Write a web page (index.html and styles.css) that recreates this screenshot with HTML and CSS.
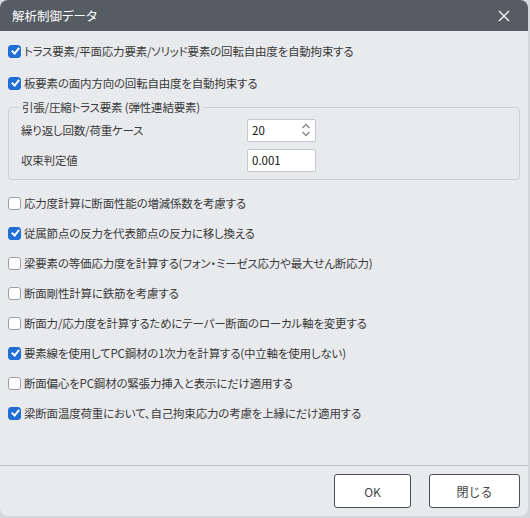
FILE: index.html
```html
<!DOCTYPE html>
<html lang="ja">
<head>
<meta charset="utf-8">
<link rel="stylesheet" href="styles.css">
</head>
<body>
<div class="window">
  <div class="titlebar">
    <span class="title">解析制御データ</span>
    <svg class="close" width="12" height="12" viewBox="0 0 12 12"><path d="M1 1L11 11M11 1L1 11" stroke="#fff" stroke-width="1.3" fill="none"/></svg>
  </div>
  <div class="content">
    <label class="row"><span class="cb on"></span>トラス要素/平面応力要素/ソリッド要素の回転自由度を自動拘束する</label>
    <label class="row"><span class="cb on"></span>板要素の面内方向の回転自由度を自動拘束する</label>
    <fieldset class="group">
      <legend>引張/圧縮トラス要素 (弾性連結要素)</legend>
      <div class="field">
        <span class="flabel">繰り返し回数/荷重ケース</span>
        <div class="input spin"><span>20</span>
          <svg width="10" height="16" viewBox="0 0 10 16"><path d="M1.5 6L5 2.5L8.5 6M1.5 10L5 13.5L8.5 10" stroke="#888" stroke-width="1.4" fill="none"/></svg>
        </div>
      </div>
      <div class="field">
        <span class="flabel">収束判定値</span>
        <div class="input"><span>0.001</span></div>
      </div>
    </fieldset>
    <div class="list">
      <label class="row"><span class="cb"></span>応力度計算に断面性能の増減係数を考慮する</label>
      <label class="row"><span class="cb on"></span>従属節点の反力を代表節点の反力に移し換える</label>
      <label class="row"><span class="cb"></span>梁要素の等価応力度を計算する(フォン・ミーゼス応力や最大せん断応力)</label>
      <label class="row"><span class="cb"></span>断面剛性計算に鉄筋を考慮する</label>
      <label class="row"><span class="cb"></span>断面力/応力度を計算するためにテーパー断面のローカル軸を変更する</label>
      <label class="row"><span class="cb on"></span>要素線を使用してPC鋼材の1次力を計算する(中立軸を使用しない)</label>
      <label class="row"><span class="cb"></span>断面偏心をPC鋼材の緊張力挿入と表示にだけ適用する</label>
      <label class="row"><span class="cb on"></span>梁断面温度荷重において、自己拘束応力の考慮を上縁にだけ適用する</label>
    </div>
  </div>
  <div class="footer">
    <button class="btn ok">OK</button>
    <button class="btn">閉じる</button>
  </div>
</div>
</body>
</html>
```
FILE: styles.css
```css
html, body {
  margin: 0;
  padding: 0;
  background: #d4d6da;
}
body {
  width: 530px;
  height: 518px;
  font-family: "Noto Sans CJK JP", "Noto Sans", sans-serif;
  font-size: 11.5px;
  letter-spacing: -0.2px;
  font-feature-settings: "palt";
  color: #3a3a3a;
  overflow: hidden;
}
.window {
  width: 528px;
  height: 516px;
  background: #e9eaee;
  border-radius: 8px;
  overflow: hidden;
  display: flex;
  flex-direction: column;
}
.titlebar {
  height: 31px;
  background: #555c64;
  display: flex;
  align-items: center;
  justify-content: space-between;
  padding: 0 18px 0 12px;
  flex-shrink: 0;
}
.title {
  color: #fff;
  font-size: 12.5px;
  letter-spacing: 0;
}
.content {
  flex: 1;
  padding: 10px 8px 0 8px;
}
.row {
  display: flex;
  align-items: center;
  height: 20px;
  white-space: nowrap;
}
.content > .row { margin-bottom: 12px; }
.content > .row + .row { margin-bottom: 0; }
.cb {
  width: 11px;
  height: 11px;
  border: 1px solid #9a9ea4;
  border-radius: 3px;
  background: #fff;
  margin-right: 3px;
  flex-shrink: 0;
  position: relative;
}
.cb.on {
  background: #1f6fd6;
  border-color: #1f6fd6;
}
.cb.on::after {
  content: "";
  position: absolute;
  left: 3.5px;
  top: 0.5px;
  width: 3px;
  height: 6px;
  border: solid #fff;
  border-width: 0 2px 2px 0;
  transform: rotate(40deg);
}
.group {
  margin: 6px 0 0 0;
  padding: 4px 12px 8px 12px;
  border: 1px solid #cdd0d5;
  border-radius: 4px;
  min-width: 0;
}
.group legend {
  padding: 0 3px;
  margin-left: -2px;
}
.field {
  display: flex;
  align-items: center;
  height: 22px;
  margin-bottom: 8px;
}
.field:last-child { margin-bottom: 0; }
.flabel {
  width: 226px;
}
.input {
  box-sizing: border-box;
  width: 69px;
  height: 23px;
  background: #fff;
  border: 1px solid #c4c8cd;
  border-radius: 2px;
  display: flex;
  align-items: center;
  justify-content: space-between;
  padding: 0 4px;
  color: #111;
  letter-spacing: 0;
}
.list {
  margin-top: 13px;
  display: flex;
  flex-direction: column;
  gap: 10px;
}
.footer {
  flex-shrink: 0;
  height: 50px;
  border-top: 1px solid #b9c0c6;
  display: flex;
  justify-content: flex-end;
  align-items: center;
  gap: 18px;
  padding: 0 8px 0 0;
}
.btn {
  width: 77px;
  height: 34px;
  background: #fff;
  border: 1px solid #4b5057;
  border-radius: 3px;
  font-family: inherit;
  font-size: 12px;
  color: #444;
  padding: 0;
}
.btn + .btn { width: 91px; }
```
